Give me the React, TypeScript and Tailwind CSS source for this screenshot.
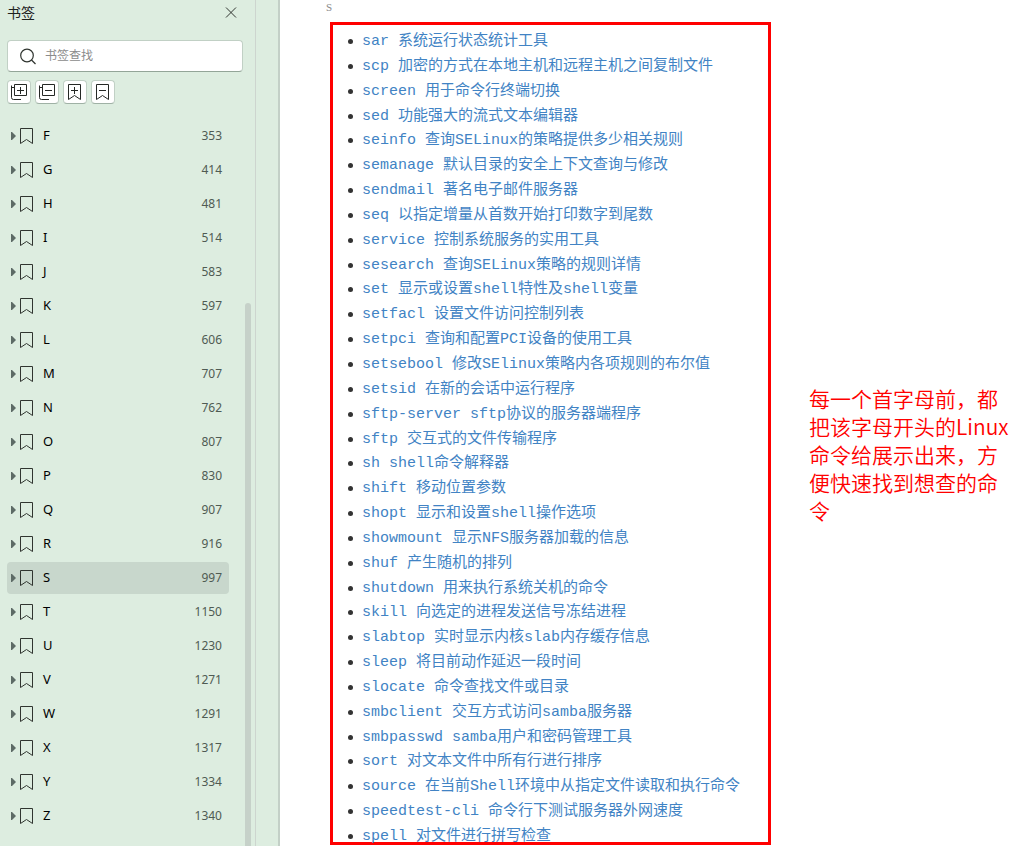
// src/App.tsx
import { useState } from 'react';
import type { ReactNode } from 'react';

const bookmarks = [
  { letter: 'F', page: 353 },
  { letter: 'G', page: 414 },
  { letter: 'H', page: 481 },
  { letter: 'I', page: 514 },
  { letter: 'J', page: 583 },
  { letter: 'K', page: 597 },
  { letter: 'L', page: 606 },
  { letter: 'M', page: 707 },
  { letter: 'N', page: 762 },
  { letter: 'O', page: 807 },
  { letter: 'P', page: 830 },
  { letter: 'Q', page: 907 },
  { letter: 'R', page: 916 },
  { letter: 'S', page: 997 },
  { letter: 'T', page: 1150 },
  { letter: 'U', page: 1230 },
  { letter: 'V', page: 1271 },
  { letter: 'W', page: 1291 },
  { letter: 'X', page: 1317 },
  { letter: 'Y', page: 1334 },
  { letter: 'Z', page: 1340 }
];

const commands = [
  'sar 系统运行状态统计工具',
  'scp 加密的方式在本地主机和远程主机之间复制文件',
  'screen 用于命令行终端切换',
  'sed 功能强大的流式文本编辑器',
  'seinfo 查询SELinux的策略提供多少相关规则',
  'semanage 默认目录的安全上下文查询与修改',
  'sendmail 著名电子邮件服务器',
  'seq 以指定增量从首数开始打印数字到尾数',
  'service 控制系统服务的实用工具',
  'sesearch 查询SELinux策略的规则详情',
  'set 显示或设置shell特性及shell变量',
  'setfacl 设置文件访问控制列表',
  'setpci 查询和配置PCI设备的使用工具',
  'setsebool 修改SElinux策略内各项规则的布尔值',
  'setsid 在新的会话中运行程序',
  'sftp-server sftp协议的服务器端程序',
  'sftp 交互式的文件传输程序',
  'sh shell命令解释器',
  'shift 移动位置参数',
  'shopt 显示和设置shell操作选项',
  'showmount 显示NFS服务器加载的信息',
  'shuf 产生随机的排列',
  'shutdown 用来执行系统关机的命令',
  'skill 向选定的进程发送信号冻结进程',
  'slabtop 实时显示内核slab内存缓存信息',
  'sleep 将目前动作延迟一段时间',
  'slocate 命令查找文件或目录',
  'smbclient 交互方式访问samba服务器',
  'smbpasswd samba用户和密码管理工具',
  'sort 对文本文件中所有行进行排序',
  'source 在当前Shell环境中从指定文件读取和执行命令',
  'speedtest-cli 命令行下测试服务器外网速度',
  'spell 对文件进行拼写检查'
];

const BookmarkIcon = (): JSX.Element => (
  <svg className="shrink-0" width="14" height="18" viewBox="0 0 14 18" fill="none" stroke="#303530" aria-hidden="true">
    <path d="M.5 1.5h12v15l-6-4-6 4z" />
  </svg>
);

const ToolButton = ({ label, children }: { label: string; children: ReactNode }): JSX.Element => (
  <button
    type="button"
    aria-label={label}
    className="w-6 h-6 flex items-center justify-center rounded border border-[#c1d0c5] border-b-[#9fb1a5] bg-white"
  >
    <svg className="shrink-0" width="18" height="18" viewBox="0 0 18 18" fill="none" stroke="#252825" aria-hidden="true">
      {children}
    </svg>
  </button>
);

const Sidebar = (): JSX.Element => {
  const [active, setActive] = useState('S');

  return (
    <aside className="w-[280px] shrink-0 flex bg-[#ddede0] border-r-2 border-[#c3d0c7] font-['Noto_Sans','Noto_Sans_CJK_SC',sans-serif]">
      <div className="w-[256px] flex flex-col border-r border-[#cdd5cf]">
        <header className="h-10 pl-[7px] pr-3.5 pb-3.5 flex items-center justify-between">
          <h1 className="text-sm leading-5 text-[#1d211e]">书签</h1>
          <button type="button" aria-label="关闭" className="p-1">
            <svg width="12" height="12" viewBox="0 0 12 12" stroke="#303530" aria-hidden="true">
              <path d="M1 .5l10 10M11 .5l-10 10" />
            </svg>
          </button>
        </header>

        <label className="h-8 ml-[7px] mr-3 pl-3 flex items-center gap-2 rounded border border-[#c1d0c5] border-b-[#93a598] bg-white">
          <svg className="shrink-0" width="17" height="17" viewBox="0 0 17 17" fill="none" stroke="#303530" strokeWidth="1.2" aria-hidden="true">
            <circle cx="7" cy="7.5" r="6.3" />
            <path d="M11.5 12l4 4" />
          </svg>
          <input
            type="text"
            aria-label="书签查找"
            placeholder="书签查找"
            className="min-w-0 flex-1 bg-transparent text-xs text-black placeholder:text-[#8b8b8b] outline-none"
          />
        </label>

        <div className="mt-2 ml-[7px] flex gap-1">
          <ToolButton label="全部展开">
            <path d="M4.5 1.5h12v11h-12zM7 7.5h7M10.5 4v7M1.5 2.500v12q0 2 2 2H11M1.5 4.5h3" />
          </ToolButton>
          <ToolButton label="全部折叠">
            <path d="M4.5 1.5h12v11h-12zM7 7.5h7M1.5 2.500v12q0 2 2 2H11M1.5 4.5h3" />
          </ToolButton>
          <ToolButton label="添加书签">
            <path d="M2.5 1.5h12v15l-6-4-6 4zM5 7.5h7M8.5 4v7" />
          </ToolButton>
          <ToolButton label="删除书签">
            <path d="M2.5 1.5h12v15l-6-4-6 4zM5 7.5h7" />
          </ToolButton>
        </div>

        <div className="mt-4 pl-[7px] pr-1 flex flex-1 justify-between">
          <ul className="w-[222px] flex flex-col gap-0.5">
            {bookmarks.map(({ letter, page }) => (
              <li key={letter}>
                <button
                  type="button"
                  onClick={() => setActive(letter)}
                  className={
                    active === letter
                      ? 'w-full h-8 pl-1 pr-[7px] flex items-center rounded bg-[#c8d7cc]'
                      : 'w-full h-8 pl-1 pr-[7px] flex items-center rounded'
                  }
                >
                  <svg className="mr-1 shrink-0" width="5" height="8" viewBox="0 0 5 8" fill="#5d6b66" aria-hidden="true">
                    <path d="M0 0h1l4 4-4 4H0z" />
                  </svg>
                  <BookmarkIcon />
                  <span className="ml-[9px] text-[13px] text-black">{letter}</span>
                  <span className="ml-auto text-xs text-[#4f5b53]">{page}</span>
                </button>
              </li>
            ))}
          </ul>
          <div className="w-1.5 mt-[183px] rounded-t-full bg-[#c6d1c9]" />
        </div>
      </div>
    </aside>
  );
};

export const App = (): JSX.Element => {
  return (
    <div className="min-h-screen flex bg-white">
      <Sidebar />
      <main className="min-w-0 flex-1 flex items-stretch pl-[46px]">
        <article className="shrink-0 flex flex-col pb-px">
          <h2 className="h-[22px] font-['Liberation_Serif',serif] text-[11px] leading-[14px] text-[#8a8a8a]">S</h2>
          <section className="w-[441px] ml-1 flex-1 flex border-[3px] border-[#ff0000]">
            <ul className="flex-1 pt-2.5 -mb-0.5 pl-[29px] flex flex-col justify-between font-['Liberation_Mono','Noto_Sans_CJK_SC',monospace] text-[15px] leading-[14px]">
              {commands.map((command) => (
                <li key={command} className="relative flex items-center whitespace-nowrap">
                  <span className="absolute -left-3.5 top-1 w-[5px] h-[5px] rounded-full bg-[#333333]" />
                  <a href="#" className="text-[#4183c4]">
                    {command}
                  </a>
                </li>
              ))}
            </ul>
          </section>
        </article>
        <p className="flex-1 self-center pl-[38px] pr-5 pt-[62px] font-['Noto_Sans_CJK_SC',sans-serif] text-[21px] leading-7 font-[350] text-[#ff0000]">
          每一个首字母前，都把该字母开头的Linux命令给展示出来，方便快速找到想查的命令
        </p>
      </main>
    </div>
  );
};

export default App;
